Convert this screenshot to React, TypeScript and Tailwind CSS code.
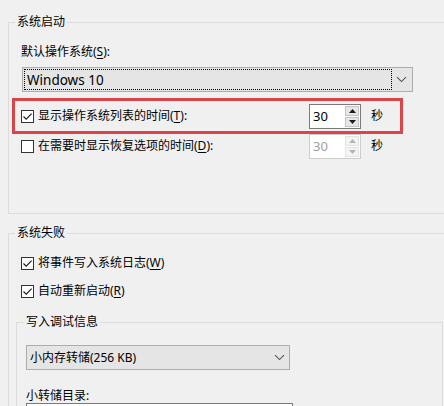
import React from 'react';

const Check = ({ checked }: { checked: boolean }) => (
  <span className="flex h-[13px] w-[13px] shrink-0 items-center justify-center border border-[#333333] bg-white">
    {checked && (
      <svg width="11" height="11" viewBox="0 0 11 11">
        <path d="M1.5 5.5 L4.2 8.2 L9.6 2.6" stroke="#1a1a1a" strokeWidth="1.1" fill="none" />
      </svg>
    )}
  </span>
);

const Chevron = () => (
  <svg width="11" height="7" viewBox="0 0 11 7">
    <path d="M1 1.2 L5.5 5.6 L10 1.2" stroke="#555555" strokeWidth="1.1" fill="none" />
  </svg>
);

const Arrow = ({ up, disabled }: { up?: boolean; disabled?: boolean }) => (
  <svg width="7" height="4" viewBox="0 0 7 4">
    <path d={up ? 'M0 4 L3.5 0 L7 4 Z' : 'M0 0 L7 0 L3.5 4 Z'} fill={disabled ? '#b5b5b5' : '#1a1a1a'} />
  </svg>
);

const SpinBox = ({ disabled }: { disabled?: boolean }) => (
  <div
    className={`flex h-[25px] w-[52px] shrink-0 border bg-white ${
      disabled ? 'border-[#cccccc]' : 'border-[#7a7a7a]'
    }`}
  >
    <div className={`flex flex-1 items-center pl-[3px] text-[13px] ${disabled ? 'text-[#a0a0a0]' : 'text-black'}`}>30</div>
    <div className="flex w-[16px] flex-col gap-[1px] p-[1px]">
      <div
        className={`flex flex-1 items-center justify-center border ${
          disabled ? 'border-[#e3e3e3] bg-[#f4f4f4]' : 'border-[#c4c4c4] bg-[#e6e6e6]'
        }`}
      >
        <Arrow up disabled={disabled} />
      </div>
      <div
        className={`flex flex-1 items-center justify-center border ${
          disabled ? 'border-[#e3e3e3] bg-[#f4f4f4]' : 'border-[#c4c4c4] bg-[#e6e6e6]'
        }`}
      >
        <Arrow disabled={disabled} />
      </div>
    </div>
  </div>
);

const U = ({ children }: { children: React.ReactNode }) => <span className="underline underline-offset-2">{children}</span>;

export default function App() {
  return (
    <div className="h-[406px] w-[444px] overflow-hidden bg-[#f0f0f0] pt-[14px] font-['Noto_Sans','Noto_Sans_CJK_SC',sans-serif] text-[12px] leading-[16px] text-black">
      {/* 系统启动 */}
      <fieldset className="ml-[8px] h-[200px] w-[460px] border-t border-b border-l border-[#dcdcdc]">
        <legend className="ml-[6px] px-[2px] leading-[16px]">系统启动</legend>

        <div className="ml-[12px] mt-[14px]">
          默认操作系统(<U>S</U>):
        </div>

        <div className="ml-[13px] mt-[7px] flex h-[25px] w-[391px] items-center border border-[#adadad] bg-[#e5e5e5] p-[1px]">
          <div className="flex h-full flex-1 items-center border border-dotted border-black pl-[2px] text-[13.5px]">Windows 10</div>
          <div className="flex w-[19px] items-center justify-center">
            <Chevron />
          </div>
        </div>

        <div className="ml-[3px] mt-[6px] flex h-[36px] w-[391px] items-center border-[3px] border-[#db4449]">
          <div className="ml-[6px] flex w-[288px] items-center gap-[4px]">
            <Check checked />
            <span>
              显示操作系统列表的时间(<U>T</U>):
            </span>
          </div>
          <SpinBox />
          <span className="ml-[10px]">秒</span>
        </div>

        <div className="ml-[12px] flex h-[24px] items-center">
          <div className="flex w-[288px] items-center gap-[4px]">
            <Check checked={false} />
            <span>
              在需要时显示恢复选项的时间(<U>D</U>):
            </span>
          </div>
          <SpinBox disabled />
          <span className="ml-[10px]">秒</span>
        </div>
      </fieldset>

      {/* 系统失败 */}
      <fieldset className="ml-[8px] mt-[11px] h-[220px] w-[460px] border-t border-l border-[#dcdcdc]">
        <legend className="ml-[6px] px-[2px] leading-[16px]">系统失败</legend>

        <div className="ml-[12px] mt-[14px] flex h-[16px] items-center gap-[4px]">
          <Check checked />
          <span>
            将事件写入系统日志(<U>W</U>)
          </span>
        </div>
        <div className="ml-[12px] mt-[12px] flex h-[16px] items-center gap-[4px]">
          <Check checked />
          <span>
            自动重新启动(<U>R</U>)
          </span>
        </div>

        <fieldset className="ml-[7px] mt-[15px] h-[140px] w-[427px] border border-[#dcdcdc]">
          <legend className="ml-[7px] px-[2px] leading-[16px]">写入调试信息</legend>

          <div className="ml-[9px] mt-[15px] flex h-[25px] w-[264px] items-center border border-[#adadad] bg-[#e5e5e5]">
            <div className="flex-1 pl-[3px]">小内存转储(256 KB)</div>
            <div className="flex w-[20px] items-center justify-center">
              <Chevron />
            </div>
          </div>

          <div className="ml-[9px] mt-[19px] leading-[14px]">小转储目录:</div>
          <div className="ml-[9px] h-[22px] w-[267px] border border-[#7a7a7a] bg-white" />
        </fieldset>
      </fieldset>
    </div>
  );
}
